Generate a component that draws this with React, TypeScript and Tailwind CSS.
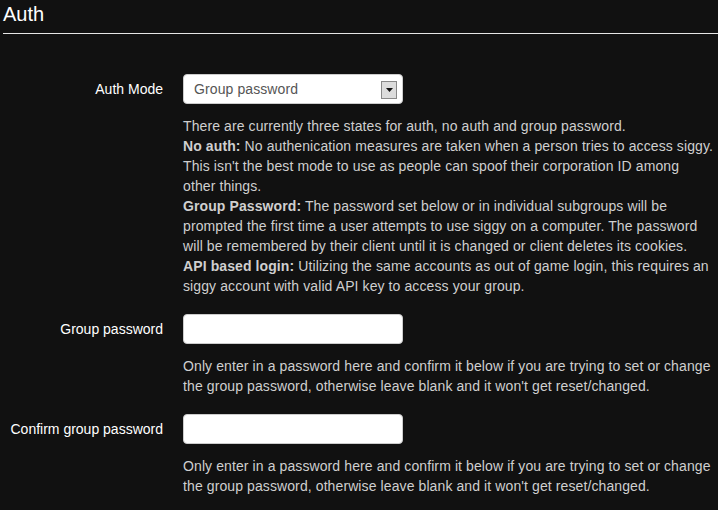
import React from 'react'

function Field({ label, children, help, className = '' }: { label: string; children: React.ReactNode; help: React.ReactNode; className?: string }) {
  return (
    <div className={`flex ${className}`}>
      <div className="w-[163px] shrink-0 h-[30px] flex items-center justify-end text-white">{label}</div>
      <div className="ml-[20px] flex-1 pr-[4px]">
        {children}
        <div className="mt-[12px] text-[#cfcfcf] leading-[20px] tracking-[0.1px]">{help}</div>
      </div>
    </div>
  )
}

const pwHelp = (
  <>
    Only enter in a password here and confirm it below if you are trying to set or change the group password, otherwise leave blank and it won't get reset/changed.
  </>
)

export default function App() {
  return (
    <div className="min-h-screen bg-[#111111] text-[14px] font-['Liberation_Sans',Arial,sans-serif]">
      {/* Header */}
      <div className="pl-[3px]">
        <h2 className="text-[20px] leading-[28px] text-white">Auth</h2>
        <div className="mt-[5px] h-px bg-[#e6e6e6]"></div>
      </div>

      <div className="mt-[40px]">
        <Field
          label="Auth Mode"
          help={
            <>
              There are currently three states for auth, no auth and group password.
              <br />
              <b>No auth:</b> No authenication measures are taken when a person tries to access siggy. This isn't the best mode to use as people can spoof their corporation ID among other things.
              <br />
              <b>Group Password:</b> The password set below or in individual subgroups will be prompted the first time a user attempts to use siggy on a computer. The password will be remembered by their client until it is changed or client deletes its cookies.
              <br />
              <b>API based login:</b> Utilizing the same accounts as out of game login, this requires an siggy account with valid API key to access your group.
            </>
          }
        >
          <div className="relative w-[220px] h-[30px] bg-white rounded-[4px] border border-[#ccc] flex items-center pl-[10px] text-[#555] tracking-[0.1px]">
            Group password
            <div className="absolute right-[5px] top-[6px] w-[16px] h-[18px] bg-[#dcdcdc] border border-[#888] flex items-center justify-center">
              <svg width="7" height="4" viewBox="0 0 7 4">
                <path d="M0 0h7L3.5 4z" fill="#111" />
              </svg>
            </div>
          </div>
        </Field>

        <Field label="Group password" help={pwHelp} className="mt-[18px]">
          <input type="password" className="block w-[220px] h-[30px] bg-white rounded-[4px] border border-[#ccc] px-[10px] outline-none" />
        </Field>

        <Field label="Confirm group password" help={pwHelp} className="mt-[18px]">
          <input type="password" className="block w-[220px] h-[30px] bg-white rounded-[4px] border border-[#ccc] px-[10px] outline-none" />
        </Field>
      </div>
    </div>
  )
}
